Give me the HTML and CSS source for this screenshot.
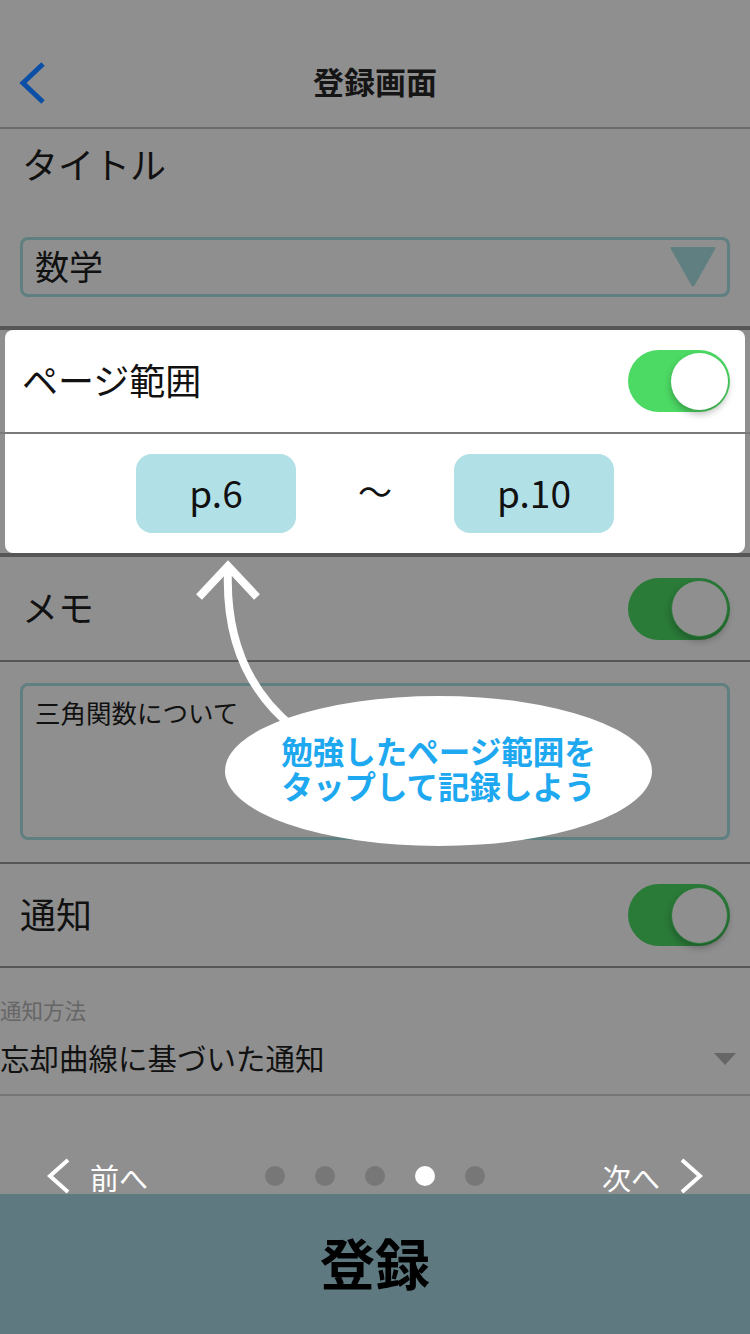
FILE: index.html
```html
<!DOCTYPE html>
<html lang="ja">
<head>
<meta charset="utf-8">
<title>登録画面</title>
<link rel="stylesheet" href="styles.css">
</head>
<body>
<div class="screen">
  <header class="nav">
    <svg class="nav-back" width="30" height="44" viewBox="0 0 30 44"><polyline points="24,3 4,22 24,41" fill="none" stroke="#0b4fa6" stroke-width="5"/></svg>
    <h1 class="nav-title">登録画面</h1>
  </header>

  <section class="title-section">
    <div class="label">タイトル</div>
    <div class="select">
      <span class="select-text">数学</span>
      <svg class="select-arrow" width="46" height="40" viewBox="0 0 46 40"><polygon points="2,1 44,1 23,38" fill="#5f7f80" stroke="#5f7f80" stroke-width="3" stroke-linejoin="round"/></svg>
    </div>
  </section>

  <div class="card-wrap">
    <div class="card">
      <div class="row card-row">
        <span class="label">ページ範囲</span>
        <div class="toggle on"><span class="knob"></span></div>
      </div>
      <div class="card-divider"></div>
      <div class="range">
        <div class="page-box">p.6</div>
        <div class="tilde">〜</div>
        <div class="page-box">p.10</div>
      </div>
    </div>
  </div>

  <div class="row memo-row">
    <span class="label">メモ</span>
    <div class="toggle dim"><span class="knob"></span></div>
  </div>

  <section class="memo-section">
    <div class="memo-box">三角関数について</div>
  </section>

  <div class="row notify-row">
    <span class="label label-notify">通知</span>
    <div class="toggle dim"><span class="knob"></span></div>
  </div>

  <section class="method">
    <div class="method-label">通知方法</div>
    <div class="method-select">
      <span>忘却曲線に基づいた通知</span>
      <svg width="22" height="12" viewBox="0 0 22 12"><polygon points="0,0 22,0 11,12" fill="#666"/></svg>
    </div>
  </section>

  <div class="spacer"></div>

  <nav class="pager">
    <div class="pager-link">
      <svg width="26" height="36" viewBox="0 0 26 36"><polyline points="23,2 5,18 23,34" fill="none" stroke="#fff" stroke-width="4"/></svg>
      <span>前へ</span>
    </div>
    <div class="dots">
      <span class="dot"></span><span class="dot"></span><span class="dot"></span><span class="dot active"></span><span class="dot"></span>
    </div>
    <div class="pager-link">
      <span>次へ</span>
      <svg width="26" height="36" viewBox="0 0 26 36"><polyline points="3,2 21,18 3,34" fill="none" stroke="#fff" stroke-width="4"/></svg>
    </div>
  </nav>

  <button class="submit">登録</button>

  <svg class="hint-arrow" width="750" height="1334" viewBox="0 0 750 1334">
    <path d="M228 570 Q 224 672 294 728" fill="none" stroke="#fff" stroke-width="8"/>
    <polyline points="199,597 228,566 257,597" fill="none" stroke="#fff" stroke-width="8"/>
  </svg>
  <div class="callout">
    <span class="callout-line">勉強したページ範囲を</span>
    <span class="callout-line">タップして記録しよう</span>
  </div>
</div>
</body>
</html>
```

FILE: styles.css
```css
* { box-sizing: border-box; }
html, body { margin: 0; padding: 0; }
body {
  width: 750px;
  height: 1334px;
  overflow: hidden;
  background: #8f8f8f;
  font-family: "Noto Sans CJK JP", "Noto Sans", sans-serif;
  color: #111;
}
.screen {
  position: relative;
  width: 750px;
  height: 1334px;
  display: flex;
  flex-direction: column;
  background: #8f8f8f;
}
.nav {
  height: 129px;
  padding-top: 40px;
  display: flex;
  align-items: center;
  justify-content: center;
  border-bottom: 2px solid #6c6c6c;
  position: relative;
}
.nav-back {
  position: absolute;
  left: 19px;
  top: 61px;
}
.nav-title {
  margin: 0;
  font-size: 31px;
  font-weight: 700;
  line-height: 40px;
  color: #151515;
  margin-top: -5px;
}
.label {
  font-size: 36px;
  line-height: 44px;
  color: #111;
  margin-top: -5px;
}
.title-section {
  padding: 17px 20px 29px;
  border-bottom: 4px solid #565656;
}
.title-section .label { padding-left: 2px; }
.select {
  margin-top: 52px;
  height: 60px;
  border: 3px solid #5f7f80;
  border-radius: 8px;
  display: flex;
  align-items: center;
  justify-content: space-between;
  padding: 0 11px 0 12px;
}
.select-text {
  font-size: 34px;
  line-height: 40px;
  color: #111;
  margin-top: -3px;
}
.card-wrap {
  padding: 0 5px;
  border-bottom: 4px solid #565656;
}
.card {
  background: #fff;
  border-radius: 8px;
}
.row {
  display: flex;
  align-items: center;
  justify-content: space-between;
}
.card-row {
  height: 102px;
  padding: 0 15px 0 17px;
}
.card-divider {
  height: 2px;
  background: #7a7a7a;
  margin: 0 -5px;
}
.range {
  height: 119px;
  display: flex;
  align-items: center;
  justify-content: center;
}
.page-box {
  width: 160px;
  height: 79px;
  border-radius: 16px;
  background: #b1e0e6;
  display: flex;
  align-items: center;
  justify-content: center;
  font-size: 37px;
  line-height: 44px;
  padding-bottom: 4px;
  color: #111;
}
.tilde {
  width: 158px;
  text-align: center;
  font-size: 34px;
  color: #111;
  margin-top: -6px;
}
.toggle {
  width: 102px;
  height: 62px;
  border-radius: 31px;
  display: flex;
  align-items: center;
  justify-content: flex-end;
  padding-right: 2px;
}
.knob {
  width: 57px;
  height: 57px;
  border-radius: 50%;
}
.toggle.on { background: #4cd964; }
.toggle.on .knob {
  background: #fff;
  box-shadow: 0 4px 7px rgba(0,0,0,0.28);
}
.toggle.dim { background: #2a7a38; }
.toggle.dim .knob {
  background: #8f8f8f;
  border: 1px solid #2a7a38;
  box-shadow: 0 4px 7px rgba(0,0,0,0.25);
}
.memo-row {
  height: 105px;
  padding: 0 20px 0 22px;
  border-bottom: 2px solid #565656;
}
.memo-section {
  padding: 21px 20px 22px;
  border-bottom: 2px solid #565656;
}
.memo-box {
  height: 157px;
  border: 3px solid #5f7f80;
  border-radius: 8px;
  padding: 9px 12px;
  font-size: 25.5px;
  line-height: 34px;
  color: #111;
}
.notify-row {
  height: 104px;
  padding: 0 20px 0 20px;
  border-bottom: 2px solid #565656;
}
.method {
  height: 128px;
  padding-top: 28px;
  border-bottom: 2px solid #767676;
}
.method-label {
  font-size: 21.5px;
  line-height: 28px;
  color: #666;
}
.method-select {
  margin-top: 13px;
  display: flex;
  align-items: center;
  justify-content: space-between;
  padding-right: 14px;
  font-size: 29.5px;
  line-height: 40px;
  color: #111;
}
.method-select svg { margin-top: 4px; }
.spacer { flex: 1; }
.pager {
  height: 40px;
  margin-bottom: -2px;
  padding: 0 45px;
  display: flex;
  align-items: center;
  justify-content: space-between;
}
.pager-link {
  display: flex;
  align-items: center;
  gap: 19px;
  color: #fff;
  font-size: 29px;
  line-height: 36px;
  width: 112px;
}
.pager-link span { margin-top: 2px; }
.pager-link:last-child { justify-content: flex-end; }
.dots {
  display: flex;
  gap: 30px;
}
.dot {
  width: 20px;
  height: 20px;
  border-radius: 50%;
  background: #777;
}
.dot.active { background: #fff; }
.submit {
  height: 140px;
  border: none;
  margin: 0;
  background: #5f7981;
  font-family: "Noto Sans CJK JP", sans-serif;
  font-size: 55px;
  font-weight: 700;
  line-height: 60px;
  color: #000;
  padding: 0 0 6px;
}
.hint-arrow {
  position: absolute;
  left: 0;
  top: 0;
  pointer-events: none;
}
.callout {
  position: absolute;
  left: 225px;
  top: 696px;
  width: 427px;
  height: 150px;
  border-radius: 50%;
  background: #fff;
  display: flex;
  flex-direction: column;
  align-items: center;
  justify-content: center;
  text-align: center;
  color: #1ea8f0;
  font-weight: 700;
  font-size: 31.5px;
  padding-bottom: 6px;
}
.callout-line {
  display: block;
  line-height: 35px;
  height: 35px;
}
```
